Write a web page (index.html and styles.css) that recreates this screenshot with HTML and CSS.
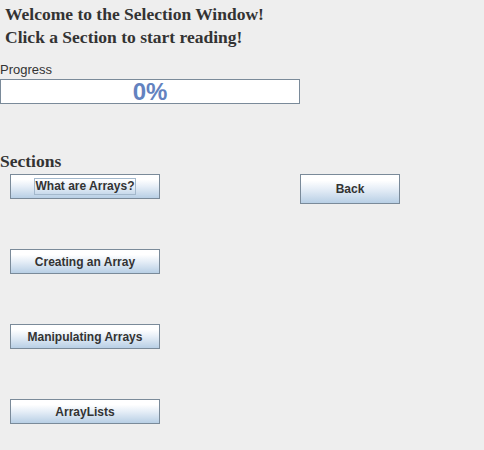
FILE: index.html
```html
<!DOCTYPE html>
<html>
<head>
<meta charset="utf-8">
<link rel="stylesheet" href="styles.css">
</head>
<body>
<div class="window">
  <div class="title">Welcome to the Selection Window!</div>
  <div class="title second">Click a Section to start reading!</div>
  <div class="progress-label">Progress</div>
  <div class="progress"><span class="pct">0%</span></div>
  <div class="sections-label">Sections</div>
  <div class="grid">
    <div class="col">
      <button class="btn"><span class="focus">What are Arrays?</span></button>
      <button class="btn">Creating an Array</button>
      <button class="btn">Manipulating Arrays</button>
      <button class="btn">ArrayLists</button>
    </div>
    <div class="side">
      <button class="btn back">Back</button>
    </div>
  </div>
</div>
</body>
</html>
```
FILE: styles.css
```css
html, body {
  margin: 0;
  padding: 0;
  background: #eeeeee;
}
.window {
  width: 484px;
  height: 450px;
  background: #eeeeee;
  display: flex;
  flex-direction: column;
}
.title {
  font-family: "Liberation Serif", "Times New Roman", serif;
  font-weight: bold;
  font-size: 17.5px;
  color: #333333;
  padding-left: 5px;
  height: 23px;
  line-height: 23px;
  margin-top: 3px;
}
.title.second {
  margin-top: 0;
}
.progress-label {
  font-family: "Liberation Sans", Arial, sans-serif;
  font-size: 13px;
  color: #333333;
  margin-top: 12px;
  height: 17px;
  line-height: 17px;
  padding-bottom: 1px;
}
.progress {
  width: 298px;
  height: 23px;
  border: 1px solid #7a8a99;
  background: #ffffff;
  display: flex;
  align-items: center;
  justify-content: center;
}
.pct {
  font-family: "Liberation Sans", Arial, sans-serif;
  font-weight: bold;
  font-size: 24px;
  color: #6382bf;
  line-height: 23px;
}
.sections-label {
  font-family: "Liberation Serif", "Times New Roman", serif;
  font-weight: bold;
  font-size: 17.5px;
  color: #333333;
  margin-top: 45px;
  height: 24px;
  line-height: 24px;
  padding-bottom: 1px;
}
.grid {
  display: grid;
  grid-template-columns: 150px 100px;
  column-gap: 140px;
  padding-left: 10px;
}
.col {
  display: flex;
  flex-direction: column;
  gap: 50px;
}
.btn {
  box-sizing: border-box;
  width: 150px;
  height: 25px;
  margin: 0;
  padding: 0;
  border: 1px solid #7a8a99;
  background: linear-gradient(to bottom, #ffffff 0%, #ffffff 20%, #e6eef7 50%, #b8cfe5 100%);
  font-family: "Liberation Sans", Arial, sans-serif;
  font-weight: bold;
  font-size: 12px;
  color: #333333;
  display: flex;
  align-items: center;
  justify-content: center;
}
.btn.back {
  width: 100px;
  height: 30px;
}
.focus {
  border: 1px solid #a3b8cc;
  padding: 0 1px;
  line-height: 15px;
}
```
